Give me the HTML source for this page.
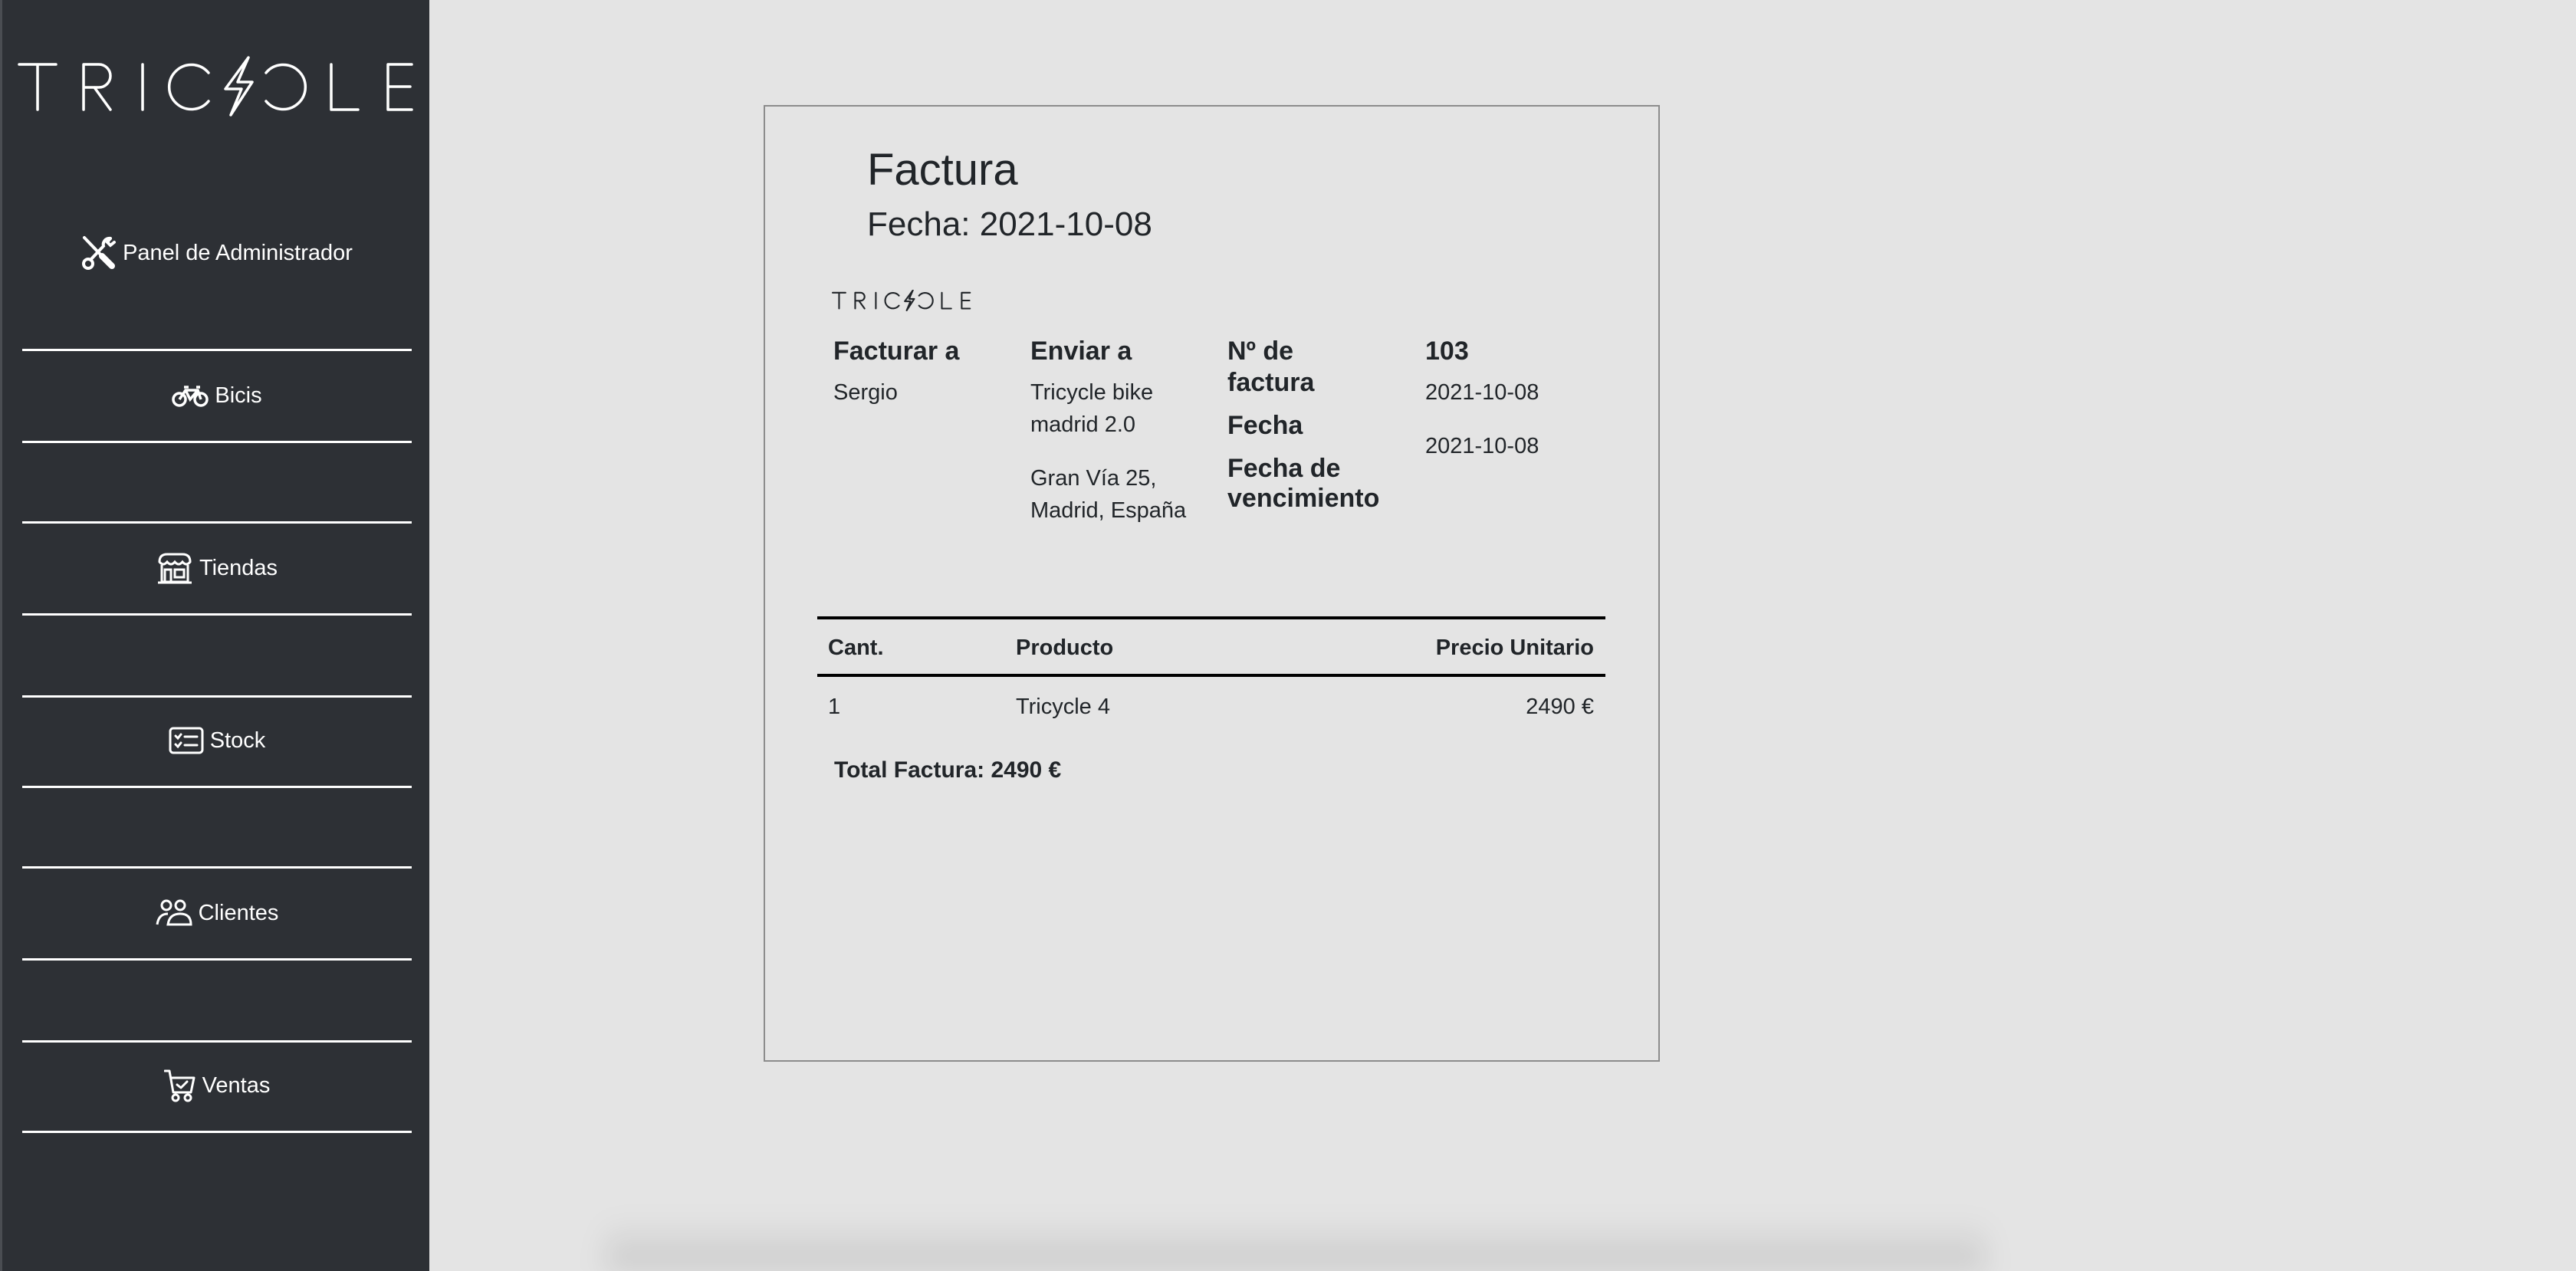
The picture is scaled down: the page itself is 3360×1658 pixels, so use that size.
<!DOCTYPE html>
<html><head><meta charset="utf-8">
<style>
*{margin:0;padding:0;box-sizing:border-box}
html,body{width:3360px;height:1658px;overflow:hidden}
body{background:#e4e4e4;font-family:"Liberation Sans",sans-serif;color:#212529}
#w{position:relative;width:3360px;height:1658px;overflow:hidden}
.side{position:absolute;left:0;top:0;width:560px;height:1658px;background:#2d3035;border-left:3px solid #4a4d52}
.ln{position:absolute;left:26px;width:508px;height:3px;background:#fff}
.it{position:absolute;left:0;width:560px;height:60px;display:flex;align-items:center;justify-content:center;color:#fff;font-size:29px;white-space:nowrap}
.it svg{margin-right:8px}
.a{position:absolute;white-space:nowrap;line-height:1}
.b{font-weight:bold}
</style></head><body><div id="w">
<div class="side">
<svg style="position:absolute;left:19px;top:73px" width="520" height="80" viewBox="0 0 520 80" fill="none" stroke="#fff" stroke-width="3.5" stroke-linecap="round" stroke-linejoin="round">
<path d="M3 11H51M27 11V70"/>
<path d="M87 70V11H107A15 15 0 0 1 107 41H87M101 41L122 70"/>
<path d="M164 11V70"/>
<path d="M250 22A29 29 0 1 0 250 59"/>
<path d="M302 2L272 43H293L279 77L307 34H288Z"/>
<path d="M325 22A29 29 0 1 1 325 59"/>
<path d="M410 11V70H445"/>
<path d="M515 11H484V70H515M484 40H513"/>
</svg>
<div class="it" style="top:300px"><svg width="46" height="46" viewBox="0 0 46 46" fill="none" stroke="#fff" stroke-width="4" stroke-linecap="round"><path d="M4 3L26 26"/><path d="M27 27L40 40" stroke-width="8"/><path d="M38 4A8 8 0 0 0 29 14L12 32"/><circle cx="9" cy="37" r="6"/><path d="M38 4L34 9L38 13L43 9"/></svg>Panel de Administrador</div>
<div class="ln" style="top:455px"></div>
<div class="it" style="top:486px"><svg width="48" height="30" viewBox="0 0 48 30" fill="none" stroke="#fff" stroke-width="3.5"><circle cx="10" cy="20" r="8"/><circle cx="38" cy="20" r="8"/><path d="M10 20L18 8H34L38 20M18 8L24 20L34 8M16 4H22M32 4H37"/></svg>Bicis</div>
<div class="ln" style="top:575px"></div>
<div class="ln" style="top:680px"></div>
<div class="it" style="top:711px"><svg width="48" height="44" viewBox="0 0 48 44" fill="none" stroke="#fff" stroke-width="3"><path d="M4 14Q4 4 14 4H34Q44 4 44 14Q39 20 34 14Q29 20 24 14Q19 20 14 14Q9 20 4 14Z"/><path d="M7 18V40H41V18M2 41H46M11 40V24H19V40M24 24H36V34H24Z"/></svg>Tiendas</div>
<div class="ln" style="top:800px"></div>
<div class="ln" style="top:907px"></div>
<div class="it" style="top:936px"><svg width="46" height="36" viewBox="0 0 46 36" fill="none" stroke="#fff" stroke-width="3" stroke-linecap="round"><rect x="2" y="2" width="42" height="32" rx="4"/><path d="M9 12L12 15L16 10M9 23L12 26L16 21M21 13H37M21 24H37"/></svg>Stock</div>
<div class="ln" style="top:1025px"></div>
<div class="ln" style="top:1130px"></div>
<div class="it" style="top:1161px"><svg width="48" height="36" viewBox="0 0 48 36" fill="none" stroke="#fff" stroke-width="3"><circle cx="14" cy="8" r="6"/><circle cx="32" cy="8" r="6"/><path d="M2 33Q4 19 16 19M16 33Q18 19 32 19Q46 19 46 33Z"/></svg>Clientes</div>
<div class="ln" style="top:1250px"></div>
<div class="ln" style="top:1357px"></div>
<div class="it" style="top:1386px"><svg width="42" height="44" viewBox="0 0 42 44" fill="none" stroke="#fff" stroke-width="3" stroke-linecap="round" stroke-linejoin="round"><path d="M1 3H7L12 31H35L39 12H9"/><path d="M17 21L22 25L30 17"/><circle cx="15" cy="38" r="4"/><circle cx="31" cy="38" r="4"/></svg>Ventas</div>
<div class="ln" style="top:1475px"></div>
</div>

<div style="position:absolute;left:996px;top:137px;width:1169px;height:1248px;border:2px solid #8c8c8c"></div>
<div class="a" style="left:1131px;top:193px;font-size:58px">Factura</div>
<div class="a" style="left:1131px;top:271px;font-size:44px">Fecha: 2021-10-08</div>
<svg style="position:absolute;left:1085px;top:378px" width="182" height="28" viewBox="0 0 520 80" fill="none" stroke="#212529" stroke-width="6" stroke-linecap="round" stroke-linejoin="round">
<path d="M3 11H51M27 11V70"/>
<path d="M87 70V11H107A15 15 0 0 1 107 41H87M101 41L122 70"/>
<path d="M164 11V70"/>
<path d="M250 22A29 29 0 1 0 250 59"/>
<path d="M302 2L272 43H293L279 77L307 34H288Z"/>
<path d="M325 22A29 29 0 1 1 325 59"/>
<path d="M410 11V70H445"/>
<path d="M515 11H484V70H515M484 40H513"/>
</svg>
<div class="a b" style="left:1087px;top:441px;font-size:34px">Facturar a</div>
<div class="a b" style="left:1344px;top:441px;font-size:34px">Enviar a</div>
<div class="a b" style="left:1601px;top:441px;font-size:34px">Nº de</div>
<div class="a b" style="left:1601px;top:482px;font-size:34px">factura</div>
<div class="a b" style="left:1601px;top:538px;font-size:34px">Fecha</div>
<div class="a b" style="left:1601px;top:594px;font-size:34px">Fecha de</div>
<div class="a b" style="left:1601px;top:633px;font-size:34px">vencimiento</div>
<div class="a b" style="left:1859px;top:441px;font-size:34px">103</div>
<div class="a" style="left:1087px;top:498px;font-size:29px">Sergio</div>
<div class="a" style="left:1344px;top:498px;font-size:29px">Tricycle bike</div>
<div class="a" style="left:1344px;top:540px;font-size:29px">madrid 2.0</div>
<div class="a" style="left:1344px;top:610px;font-size:29px">Gran Vía 25,</div>
<div class="a" style="left:1344px;top:652px;font-size:29px">Madrid, España</div>
<div class="a" style="left:1859px;top:498px;font-size:29px">2021-10-08</div>
<div class="a" style="left:1859px;top:568px;font-size:29px">2021-10-08</div>
<div style="position:absolute;left:1066px;top:804px;width:1028px;height:4px;background:#000"></div>
<div style="position:absolute;left:1066px;top:879px;width:1028px;height:4px;background:#000"></div>
<div class="a b" style="left:1080px;top:831px;font-size:29px">Cant.</div>
<div class="a b" style="left:1325px;top:831px;font-size:29px">Producto</div>
<div class="a b" style="right:1281px;top:831px;font-size:29px">Precio Unitario</div>
<div class="a" style="left:1080px;top:908px;font-size:29px">1</div>
<div class="a" style="left:1325px;top:908px;font-size:29px">Tricycle 4</div>
<div class="a" style="right:1281px;top:908px;font-size:29px">2490 €</div>
<div class="a b" style="left:1088px;top:990px;font-size:30px">Total Factura: 2490 €</div>

<div style="position:absolute;left:790px;top:1590px;width:1800px;height:68px;background:linear-gradient(rgba(0,0,0,0),rgba(0,0,0,0.12));filter:blur(18px)"></div>
</div></body></html>
